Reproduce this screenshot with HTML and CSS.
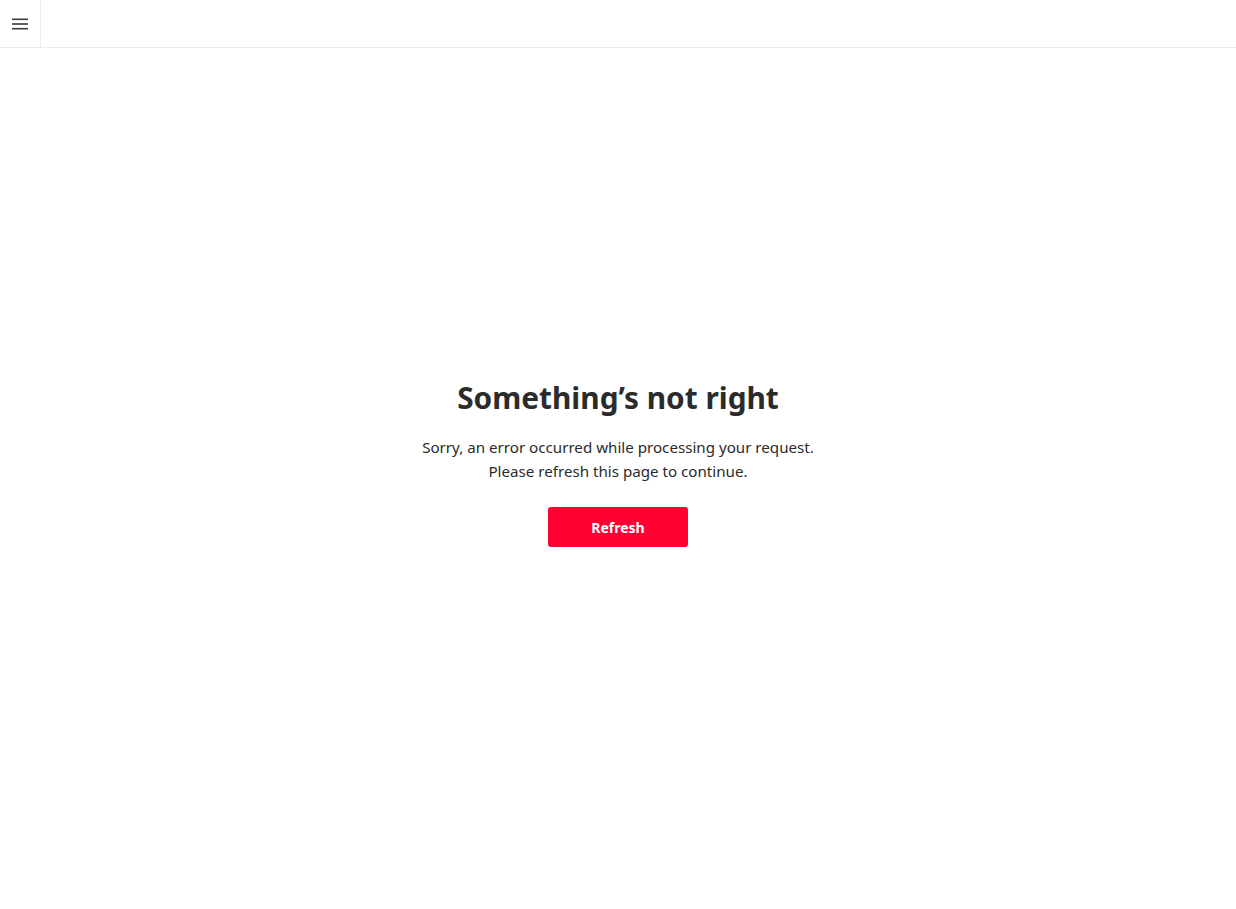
FILE: index.html
```html
<!DOCTYPE html>
<html lang="en">
<head>
<meta charset="utf-8">
<title>Error</title>
<link rel="stylesheet" href="styles.css">
</head>
<body>
<header class="topbar">
  <button class="menu-btn" aria-label="Menu">
    <svg width="16" height="12" viewBox="0 0 16 12" aria-hidden="true">
      <rect x="0" y="0.5" width="16" height="1.6" fill="#3d3d3d"/>
      <rect x="0" y="5.2" width="16" height="1.6" fill="#3d3d3d"/>
      <rect x="0" y="9.9" width="16" height="1.6" fill="#3d3d3d"/>
    </svg>
  </button>
</header>
<main class="content">
  <div class="error">
    <h1 class="title">Something’s not right</h1>
    <p class="message">Sorry, an error occurred while processing your request.<br>Please refresh this page to continue.</p>
    <button class="refresh">Refresh</button>
  </div>
</main>
</body>
</html>
```

FILE: styles.css
```css
html, body {
  margin: 0;
  padding: 0;
  height: 100%;
  background: #ffffff;
  font-family: "Noto Sans", "Open Sans", "Liberation Sans", sans-serif;
  color: #2b2b2b;
}
body {
  display: flex;
  flex-direction: column;
}
.topbar {
  height: 47px;
  border-bottom: 1px solid #ececec;
  display: flex;
  flex-shrink: 0;
}
.menu-btn {
  width: 41px;
  height: 47px;
  border: none;
  border-right: 1px solid #ececec;
  background: transparent;
  padding: 0;
  display: flex;
  align-items: center;
  justify-content: center;
  cursor: pointer;
}
.menu-btn svg {
  display: block;
  margin-top: 1px;
}
.content {
  flex: 1;
  display: flex;
  justify-content: center;
  align-items: flex-start;
  padding-top: 330px;
}
.error {
  display: flex;
  flex-direction: column;
  align-items: center;
  text-align: center;
}
.title {
  margin: 0;
  font-size: 29.8px;
  font-weight: 700;
  line-height: 40px;
  color: #2b2b2b;
  letter-spacing: 0;
}
.message {
  margin: 17px 0 0;
  font-size: 15.15px;
  line-height: 24px;
  color: #2b2b2b;
}
.refresh {
  margin-top: 24px;
  width: 140px;
  height: 40px;
  border: none;
  border-radius: 3px;
  background: #ff0033;
  color: #ffffff;
  font-family: inherit;
  font-weight: 700;
  font-size: 14px;
  cursor: pointer;
}
```
